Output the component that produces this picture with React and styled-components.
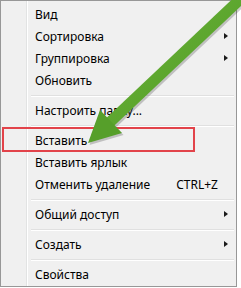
import React from "react"
import styled, { createGlobalStyle } from "styled-components"

const Global = createGlobalStyle`
  html, body {
    margin: 0;
    padding: 0;
    background: #ffffff;
  }
  body {
    font-family: "Noto Sans", "Open Sans", sans-serif;
  }
`

const Scene = styled.div`
  position: relative;
  width: 241px;
  height: 288px;
  overflow: hidden;
`

const Menu = styled.div`
  position: relative;
  width: 237px;
  box-sizing: border-box;
  border: 1px solid #979797;
  background: #f0f0f0;
  padding: 2px 2px 1px;
  display: flex;
  flex-direction: column;

  &::before {
    content: "";
    position: absolute;
    top: 0;
    bottom: 0;
    left: 25px;
    width: 1px;
    background: #e2e3e3;
    box-shadow: 1px 0 0 #ffffff;
  }
`

const Item = styled.div`
  height: 22px;
  display: flex;
  align-items: center;
  padding-left: 32px;
  padding-right: 6px;
  font-size: 12px;
  color: #000000;
  white-space: nowrap;
`

const Label = styled.span`
  flex: 1;
`

const Shortcut = styled.span`
  margin-right: 10px;
`

const SubArrow = styled.span`
  width: 0;
  height: 0;
  border-top: 3.5px solid transparent;
  border-bottom: 3.5px solid transparent;
  border-left: 4px solid #1a1a1a;
`

const Separator = styled.div`
  height: 8px;
  display: flex;
  align-items: center;
  padding-left: 28px;

  &::after {
    content: "";
    flex: 1;
    height: 1px;
    background: #e0e0e0;
    box-shadow: 0 1px 0 #ffffff;
  }
`

const Highlight = styled.div`
  position: absolute;
  left: 2px;
  top: 127px;
  width: 193px;
  height: 25px;
  box-sizing: border-box;
  border: 2px solid #e2434a;
`

const Pointer = styled.svg`
  position: absolute;
  left: 0;
  top: 0;
`

const items = [
  { label: "Вид" },
  { label: "Сортировка", sub: true },
  { label: "Группировка", sub: true },
  { label: "Обновить" },
  { sep: true },
  { label: "Настроить папку..." },
  { sep: true },
  { label: "Вставить" },
  { label: "Вставить ярлык" },
  { label: "Отменить удаление", shortcut: "CTRL+Z" },
  { sep: true },
  { label: "Общий доступ", sub: true },
  { sep: true },
  { label: "Создать", sub: true },
  { sep: true },
  { label: "Свойства" },
]

export default function App() {
  return (
    <Scene>
      <Global />
      <Menu>
        {items.map((it, i) =>
          it.sep ? (
            <Separator key={i} />
          ) : (
            <Item key={i}>
              <Label>{it.label}</Label>
              {it.shortcut && <Shortcut>{it.shortcut}</Shortcut>}
              {it.sub && <SubArrow />}
            </Item>
          )
        )}
      </Menu>
      <Highlight />
      <Pointer width="241" height="288" viewBox="0 0 241 288">
        <defs>
          <linearGradient id="g" x1="0" y1="0" x2="1" y2="1">
            <stop offset="0" stopColor="#6cb43a" />
            <stop offset="1" stopColor="#4f9a24" />
          </linearGradient>
        </defs>
        <g opacity="0.25" transform="translate(1.5,2)">
          <line x1="252" y1="-12" x2="108" y2="124" stroke="#333" strokeWidth="11" />
          <polygon points="88,143 100,110 122,133" fill="#333" />
        </g>
        <line x1="252" y1="-12" x2="108" y2="124" stroke="url(#g)" strokeWidth="11" />
        <polygon points="88,143 100,110 122,133" fill="#569f2a" />
      </Pointer>
    </Scene>
  )
}
